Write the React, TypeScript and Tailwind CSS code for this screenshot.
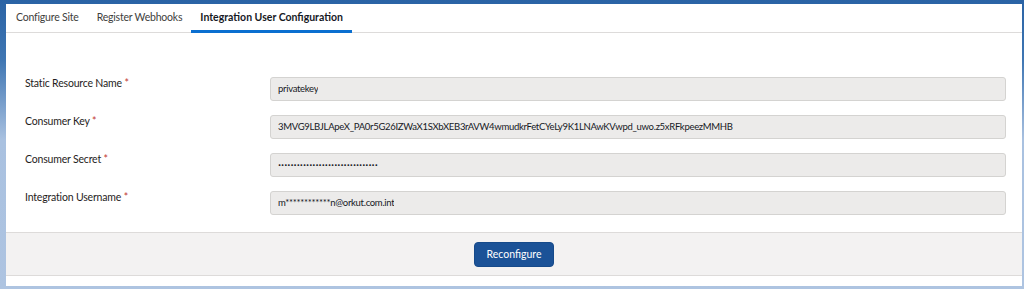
import React from 'react';

const FONT = { fontFamily: 'Lato, "Open Sans", "Liberation Sans", sans-serif' };

type Field = { label: string; value: string; secret?: boolean };

const FIELDS: Field[] = [
  { label: 'Static Resource Name', value: 'privatekey' },
  {
    label: 'Consumer Key',
    value:
      '3MVG9LBJLApeX_PA0r5G26IZWaX1SXbXEB3rAVW4wmudkrFetCYeLy9K1LNAwKVwpd_uwo.z5xRFkpeezMMHB',
  },
  { label: 'Consumer Secret', value: '································', secret: true },
  { label: 'Integration Username', value: 'm************n@orkut.com.int' },
];

const TABS = ['Configure Site', 'Register Webhooks', 'Integration User Configuration'];

function FieldRow({ field }: { field: Field }) {
  return (
    <div className="flex items-start">
      <label className="mt-[-3px] w-[245px] shrink-0 text-[10.5px] leading-[18px] tracking-[-0.18px] text-[#1f1d1c]">
        {field.label} <span className="text-[#c23934]">*</span>
      </label>
      <div
        className={
          field.secret
            ? 'flex h-[24px] flex-1 items-center rounded-[3px] border border-[#d4d3d1] bg-[#ecebea] px-[7px] text-[12px] text-[#16191f]'
            : 'flex h-[24px] flex-1 items-center rounded-[3px] border border-[#d4d3d1] bg-[#ecebea] px-[7px] text-[9.5px] tracking-[-0.3px] text-[#16191f]'
        }
      >
        <span className="truncate">{field.value}</span>
      </div>
    </div>
  );
}

export default function App() {
  return (
    <div
      className="flex h-[289px] w-[1024px] flex-col bg-[linear-gradient(180deg,#2a63a5_0px,#3f76b3_60px,#a9c1e0_140px,#aec4e1_289px)] pb-[3px] pl-[6px] pr-[2px] pt-[4px]"
      style={FONT}
    >
      <div className="flex flex-1 flex-col bg-white">
        <div className="flex h-[29px] border-b border-[#dddbda] pl-[1px]">
          {TABS.map((tab, i) => {
            const active = i === TABS.length - 1;
            return (
              <div
                key={tab}
                className={
                  active
                    ? 'relative flex items-center px-[9px] text-[10.5px] font-bold text-[#16191f]'
                    : 'relative flex items-center px-[9px] text-[10.5px] tracking-[-0.2px] text-[#3e3e3c]'
                }
              >
                {tab}
                {active && (
                  <span className="absolute bottom-[-1px] left-0 right-0 h-[3px] bg-[#0b6fd0]" />
                )}
              </div>
            );
          })}
        </div>

        <div className="flex flex-col gap-[14px] pb-[17px] pl-[19px] pr-[16px] pt-[44px]">
          {FIELDS.map((f) => (
            <FieldRow key={f.label} field={f} />
          ))}
        </div>

        <div className="flex h-[44px] items-start justify-center border-y border-[#dddbda] bg-[#f3f2f2] pt-[9px]">
          <button className="h-[25px] w-[80px] rounded-[4px] border border-[#164a8a] bg-[#1b5297] text-[10.5px] text-white">
            Reconfigure
          </button>
        </div>
      </div>
    </div>
  );
}
